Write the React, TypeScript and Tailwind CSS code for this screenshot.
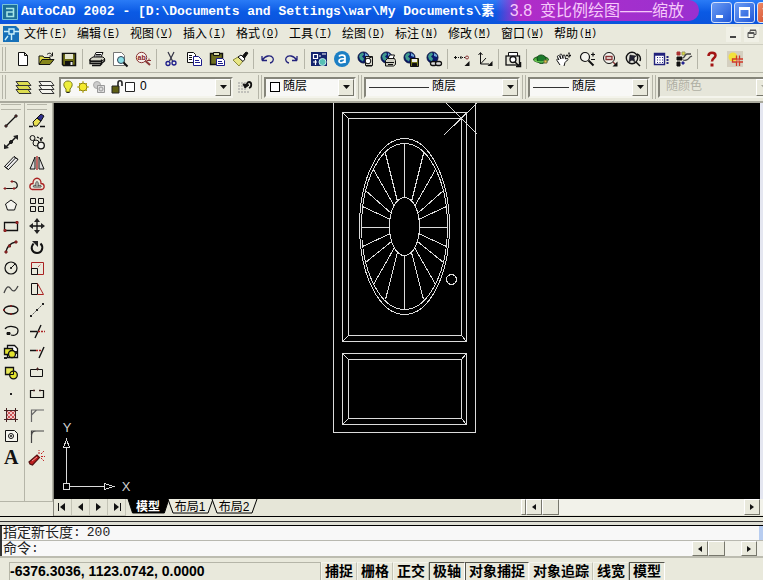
import type { ReactNode } from "react";

const ui = "font-['Liberation_Sans','Noto_Sans_CJK_SC',sans-serif]";
const mono = "font-['Liberation_Mono','Noto_Sans_CJK_SC',monospace]";
const raised = "border border-t-white border-l-white border-r-[#77776c] border-b-[#77776c] bg-[#e9e9dc]";

type Tool = { label: string; art: ReactNode };

function Icon({ children }: { children: ReactNode }) {
  return (
    <svg className="overflow-visible" width="16" height="16" viewBox="0 0 16 16" fill="none" stroke="#111" strokeWidth="1" aria-hidden="true">
      {children}
    </svg>
  );
}

const globe = (
  <>
    <circle cx="6.5" cy="6.5" r="5.5" fill="#0a1a6e" stroke="#0a1440" />
    <path d="M3 3l3-1.500 1 2-2 2 2 2-1 3-3-2-1-3z" fill="#3f9a8e" stroke="none" />
    <path d="M8 2l3 2v2l-3-1z" fill="#6fa8d8" stroke="none" />
  </>
);

const groups: Tool[][] = [
  [
    { label: "新建", art: <path d="M3.500 1.500h6l3 3v10h-9zM9.500 1.500v3h3" fill="#fff" /> },
    {
      label: "打开",
      art: (
        <>
          <path d="M1 13V5h4l1 1.500h6V9" fill="#dcd84a" />
          <path d="M1 13.500L4 8.500h12l-4 5z" fill="#86861a" />
          <path d="M9 3.500c2-2 4-1.500 5 .5M14.500 1.500V5h-3" />
        </>
      ),
    },
    {
      label: "保存",
      art: (
        <>
          <path d="M1.500 2.500h13v12h-12l-1-1z" fill="#6a6a14" strokeWidth="1.500" />
          <path d="M4 3h8v5H4z" fill="#e4e4cc" stroke="none" />
          <path d="M4 10h8v5H4z" fill="#111" stroke="none" />
          <path d="M9.500 11h2v3h-2z" fill="#eee" stroke="none" />
        </>
      ),
    },
  ],
  [
    {
      label: "打印",
      art: (
        <>
          <path d="M5 6l2-4.500h7L12 6" fill="#fff" />
          <path d="M1 8l3-2h10l2 2-3 2H1z" fill="#d6d6c8" />
          <path d="M1 8.500v4h11.500v-4M1 10.500h11.500M12.500 12.500l3-2.500V8M3 14.500h8l2-2" fill="none" strokeWidth="1.300" />
          <path d="M7 3.500h5M6.500 5h5" />
        </>
      ),
    },
    {
      label: "打印预览",
      art: (
        <>
          <path d="M1.500 1.500h8l3 3v10h-11z" fill="#fff" stroke="#777" />
          <circle cx="9" cy="9" r="3.500" fill="#8ce0e8" stroke="#345" />
          <path d="M11.500 11.500l4 4" strokeWidth="2" />
        </>
      ),
    },
    {
      label: "查找和替换",
      art: (
        <>
          <circle cx="6.500" cy="6.500" r="5.200" fill="#f6eeea" stroke="#833" />
          <path d="M10.500 10l4.500 4" stroke="#833" strokeWidth="2" />
          <text x="2.500" y="9" fontSize="7" fontWeight="700" fill="#822" stroke="none" fontFamily="Liberation Sans">ab</text>
          <path d="M12 9.500h4M14 7.500v2" stroke="#833" />
        </>
      ),
    },
  ],
  [
    {
      label: "剪切",
      art: (
        <>
          <path d="M5 1l4.500 9M11 1L6.500 10" strokeWidth="1.200" stroke="#334" />
          <circle cx="5" cy="12.500" r="2" stroke="#1c1c8a" strokeWidth="1.300" />
          <circle cx="11" cy="12" r="2" stroke="#1c1c8a" strokeWidth="1.300" />
        </>
      ),
    },
    {
      label: "复制",
      art: (
        <>
          <path d="M1.500 1.500h6l2 2v8h-8z" fill="#fff" />
          <path d="M3 4.500h3M3 6.500h3M3 8.500h3" />
          <path d="M7.500 5.500h5l3 3v6h-8z" fill="#fff" stroke="#1c1c8a" />
          <path d="M9 9.500h4M9 11.500h5" stroke="#1c1c8a" />
        </>
      ),
    },
    {
      label: "粘贴",
      art: (
        <>
          <path d="M1.500 2.500h12v11h-12z" fill="#6d6d20" strokeWidth="1.400" />
          <path d="M4.500 1.500h6v3h-6z" fill="#d8d8a8" />
          <path d="M7.500 7.500h6l2 2v5h-8z" fill="#fff" stroke="#1c1c8a" />
          <path d="M9 10.500h4M9 12.500h5" stroke="#1c1c8a" />
        </>
      ),
    },
    {
      label: "特性匹配",
      art: (
        <>
          <path d="M1 9l5-3 5 4-4 5z" fill="#e8e684" stroke="#8a8a3a" />
          <path d="M6 6l3-2 4 4-2 2.500z" fill="#fff" />
          <path d="M10.500 5L14 1l2 1-3.500 5z" fill="#111" />
        </>
      ),
    },
  ],
  [
    { label: "放弃", art: <path d="M2 9.500V5M2 9.500h5M2.500 9C5 4.500 11 3.500 13 7c1 2-.5 4.500-3 5" stroke="#22227c" strokeWidth="1.300" /> },
    { label: "重做", art: <path d="M14 9.500V5M14 9.500H9M13.500 9C11 4.500 5 3.500 3 7c-1 2 .5 4.500 3 5" stroke="#22227c" strokeWidth="1.300" /> },
  ],
  [
    {
      label: "今日",
      art: (
        <>
          <path d="M0 1h16v14H0z" fill="#14246e" stroke="none" />
          <path d="M2.500 3.500h4v4h-4zM8 5h2M11 3h4M4.500 9v5M2 11h4" stroke="#fff" strokeWidth="1.200" />
          <circle cx="11.500" cy="11" r="3.500" fill="#58c0b4" stroke="#c0ece8" />
        </>
      ),
    },
    {
      label: "Autodesk 联机",
      art: (
        <>
          <circle cx="8" cy="8" r="8" fill="#1b7fc4" stroke="none" />
          <path d="M5 5.500c1-2 6-2 6 .7V12M11 7.500C8 7.500 5 8 5 10c0 2.500 4.500 2.300 6-.5" stroke="#fff" strokeWidth="1.700" />
        </>
      ),
    },
    {
      label: "发布到 Web",
      art: (
        <>
          {globe}
          <path d="M8.500 5.500h7v9h-7z" fill="#d8d8cc" />
          <circle cx="11" cy="10" r="2.800" fill="#fff" />
          <path d="M9 15h6M12 7l3-1" />
        </>
      ),
    },
    {
      label: "电子传递",
      art: (
        <>
          {globe}
          <path d="M8 8l1.500-4h5L13 8z" fill="#fff" />
          <path d="M5.500 9.500l2-2h7l1 2v4l-2 1.500h-8z" fill="#d0d0c4" />
          <path d="M6 11.500h8M8 13.500h5" />
        </>
      ),
    },
    {
      label: "保存到 Web",
      art: (
        <>
          {globe}
          <path d="M7.500 7.500h8v8h-8z" fill="#77771e" />
          <path d="M9 8h5v3H9z" fill="#eee" stroke="none" />
          <path d="M9.500 12.500h4V15h-4z" fill="#111" />
        </>
      ),
    },
    {
      label: "插入超链接",
      art: (
        <>
          {globe}
          <rect x="4.500" y="10.500" width="6" height="4" rx="2" fill="#ddd" strokeWidth="1.300" />
          <rect x="9.500" y="10.500" width="6" height="4" rx="2" fill="#ddd" strokeWidth="1.300" />
        </>
      ),
    },
  ],
  [
    {
      label: "临时追踪点",
      art: (
        <>
          <path d="M0 6.500h11" strokeDasharray="1 1" />
          <path d="M1.500 5v3M7 5v3" />
          <circle cx="13" cy="6.500" r="1.500" stroke="#833" />
          <path d="M15.500 10v5h-5z" fill="#111" stroke="none" />
        </>
      ),
    },
    {
      label: "UCS",
      art: (
        <>
          <path d="M3.500 2v11H12M3.500 13L9 7M1.500 4l2-2.500 2 2.500" />
          <path d="M15.500 10v5h-5z" fill="#111" stroke="none" />
        </>
      ),
    },
  ],
  [
    {
      label: "鸟瞰视图",
      art: (
        <>
          <path d="M3.500 5V1.500h9V5" fill="#fff" />
          <rect x="1" y="5" width="13.500" height="9" fill="#e8e8dc" strokeWidth="1.300" />
          <circle cx="8" cy="8.500" r="3" fill="#fff" strokeWidth="1.300" />
          <path d="M10 11l4 4M15.500 11v4.500H11" strokeWidth="1.500" />
        </>
      ),
    },
  ],
  [
    {
      label: "三维动态观察",
      art: (
        <>
          <ellipse cx="8" cy="8.500" rx="7.500" ry="3" fill="#4cae3c" stroke="#174f14" />
          <path d="M4 7c1-4 7-4 9 0l-1 4c-2 2-5 2-7 0z" fill="#1b7a2a" stroke="#104a18" />
          <path d="M1.500 9.500c4 2 9 2 13 0" stroke="#7fdc60" />
          <path d="M11 9h3v3h-3z" fill="#e8c840" stroke="#664" />
        </>
      ),
    },
    {
      label: "实时平移",
      art: (
        <>
          <path d="M4 14L1 9.500c-1-1.500 1-2 2-.5L1.500 6C1 4.500 3 4 3.500 5.500L5 8 4 4.500C3.500 3 5.500 2.500 6 4l1 3.500L7 5c0-1.500 2-1.500 2 0l.5 3L11 7.500c1.500 0 1.500 1 .5 1.500L9 11.500 8 15" fill="#fff" />
          <path d="M10 4.500h6M13 1.500v6" strokeWidth="1.400" strokeDasharray="2 1" />
        </>
      ),
    },
    {
      label: "实时缩放",
      art: (
        <>
          <circle cx="6" cy="6" r="4.500" fill="#f4f4ee" strokeWidth="1.200" />
          <path d="M9.500 9.500l5 5" strokeWidth="2" />
          <path d="M12 3.500h4M14 1.500v4M12 8.500h4" strokeWidth="1.200" />
        </>
      ),
    },
    {
      label: "窗口缩放",
      art: (
        <>
          <circle cx="7" cy="7" r="5.500" fill="#f4f4ee" />
          <path d="M4 5.500h6v3H4zM11 11l3 3" stroke="#833" strokeWidth="1.300" />
          <path d="M15.500 10.500v5h-5z" fill="#111" stroke="none" />
        </>
      ),
    },
    {
      label: "缩放上一个",
      art: (
        <>
          <circle cx="7" cy="7" r="5.700" fill="#e4e4dc" strokeWidth="1.400" />
          <path d="M4 11l1-7 6 1-2 2 1 4-3-2z" fill="#223" strokeWidth="0.500" />
          <path d="M11 11l4 4M12 3c3 1 4 4 3 7" strokeWidth="1.500" />
        </>
      ),
    },
  ],
  [
    {
      label: "特性",
      art: (
        <>
          <path d="M1.500 2.500h10v11h-10z" fill="#fff" stroke="#22227c" strokeWidth="1.400" />
          <path d="M1.500 3.500h10" stroke="#22227c" strokeWidth="2.500" />
          <path d="M4.500 6v7M7 6v7M9.500 6v7" stroke="#22227c" strokeDasharray="1 1.500" />
          <path d="M14.500 5v9" strokeDasharray="2 1" stroke="#22227c" strokeWidth="2" />
        </>
      ),
    },
    {
      label: "设计中心",
      art: (
        <>
          <path d="M1 1h3v3H1z" fill="#a33" stroke="#a33" />
          <path d="M6 1h3v3H6z" fill="#dd3" stroke="#996" />
          <path d="M1 6h5v3H1zM1 11h3v4H1z" fill="#111" />
          <path d="M6 11h2v2H6z" fill="#252590" stroke="#252590" />
          <path d="M7 7c2-1 2-4 4-4h4M7 9c3 1 5 0 7-3l2-1" stroke="#444" strokeWidth="1.300" />
        </>
      ),
    },
  ],
  [
    {
      label: "帮助",
      art: (
        <>
          <path d="M4.500 5c0-4.500 7-4 7-.5C11.500 7 8 7 8 10.500" stroke="#a31414" strokeWidth="2.500" />
          <path d="M6.500 12.500h3v3h-3z" fill="#a31414" stroke="none" />
        </>
      ),
    },
    {
      label: "活动助手",
      art: (
        <>
          <path d="M0 0h16v16H0z" fill="#d4cfc0" stroke="none" />
          <circle cx="6" cy="6" r="4.500" fill="#f2e23c" stroke="none" />
          <path d="M9.500 4.500v3.500h-4v3h4v4M12.500 15v-4h3.500M16 8h-3.500V4.500" fill="none" stroke="#d03a28" strokeWidth="1.300" />
          <path d="M10 8h2v3h-2z" fill="#fff4d0" stroke="#d03a28" />
        </>
      ),
    },
  ],
];

const drawTools: Tool[] = [
  { label: "直线", art: <><path d="M3 13L13 3" strokeWidth="1.300" /><path d="M2 12h2v2H2zM12 2h2v2h-2z" fill="#a22" stroke="#222" /></> },
  { label: "构造线", art: <><path d="M2 14L14 2" strokeWidth="1.500" /><path d="M1 15v-5l5 4zM15 1v5l-5-4z" fill="#222" stroke="none" /><circle cx="8" cy="8" r="1.500" fill="#222" /></> },
  { label: "多线", art: <path d="M1.500 11.500L11 1.500l4 3L5.500 14.500zM3.500 12.500l9-9.500M1.500 11.500l4 3M11 1.500l4 3" fill="#eee" /> },
  { label: "多段线", art: <><path d="M2 12.500h9c5 0 4-7-1-7" strokeWidth="1.200" /><path d="M1 12h2v1H1zM10 12h2v1h-2zM8 5h2v1H8z" fill="#a22" stroke="#822" /></> },
  { label: "正多边形", art: <path d="M8 3l5.500 4-2 6h-7l-2-6z" fill="#f4f4ee" /> },
  { label: "矩形", art: <><path d="M1.500 4.500h13v8h-13z" strokeWidth="1.300" /><path d="M1 11.500h2v2H1zM13 3.500h2v2h-2z" fill="#a22" stroke="#822" /></> },
  { label: "圆弧", art: <><path d="M3 13C4 8 7 4 13 3" strokeWidth="1.300" /><path d="M2 12h2v2H2zM12 2h2v2h-2zM5.500 6h2v2h-2z" fill="#a22" stroke="#722" /></> },
  { label: "圆", art: <><circle cx="8" cy="8" r="6" strokeWidth="1.200" /><path d="M8 8l4-4" /><path d="M7.500 7.500h1v1h-1z" fill="#222" /></> },
  { label: "样条曲线", art: <path d="M1 12c3-8 5-7 7-4s4 3 7-3" stroke="#444" strokeWidth="1.300" /> },
  { label: "椭圆", art: <><ellipse cx="8" cy="8" rx="7" ry="4" strokeWidth="1.300" /><path d="M7 3h2v2H7zM7 11h2v2H7zM0 7h2v2H0z" fill="#722" stroke="none" /></> },
  { label: "椭圆弧", art: <><path d="M2 6c3-4 13-3 13 1.500S11 13 8 12" strokeWidth="1.200" /><path d="M4 9.500h3v2H4z" fill="#222" /></> },
  { label: "插入块", art: <><path d="M4.500 1.500h7l3 3v9h-10z" fill="#fff" strokeWidth="1.300" /><path d="M1.500 4.500h8v6h-8z" fill="#e4e430" strokeWidth="1.300" /><circle cx="9" cy="10" r="3.500" fill="#e4e430" strokeWidth="1.300" /><path d="M1 14h3M13 7v3" stroke="#222" strokeWidth="2" /></> },
  { label: "创建块", art: <><path d="M2.500 2.500h8v7h-8z" fill="#e8e858" strokeWidth="1.300" /><circle cx="10.500" cy="10" r="3.800" fill="#e4e430" strokeWidth="1.300" /><path d="M6.500 9.500h4v-3" /></> },
  { label: "点", art: <path d="M7 7h2v2H7z" fill="#222" stroke="none" /> },
  { label: "图案填充", art: <><path d="M3.500 3.500h9v9h-9z" fill="#eecaca" /><path d="M1 3.500h14M1 12.500h14M3.500 1v14M12.500 1v14" stroke="#422" /><path d="M4 8l4-4M4 12l8-8M8 12l4-4M4 4l8 8M4 8l4 4M8 4l4 4" stroke="#c55" /></> },
  { label: "面域", art: <><path d="M2.500 2.500h9l3 3v8h-12z" fill="#f4f4ee" /><circle cx="8" cy="8" r="2.500" /><path d="M7.500 7.500h1v1h-1z" /></> },
  { label: "多行文字", art: <text x="1" y="15" fontSize="20" fontWeight="700" fill="#111" stroke="none" fontFamily="Liberation Serif">A</text> },
];

const editTools: Tool[] = [
  { label: "删除", art: <><path d="M0 13.500h4M11 13.500h5" strokeWidth="1.500" /><path d="M4 9l4-4 4 3-4 5H5z" fill="#e8e050" /><path d="M8 5l4-4 3 2-3 5z" fill="#30308c" /></> },
  { label: "复制对象", art: <><circle cx="3.500" cy="4" r="2.500" /><circle cx="7" cy="9" r="3" /><circle cx="12" cy="11.500" r="3.300" fill="#f4f4ee" strokeWidth="1.300" /><path d="M8 3l4 2M13 3v3h-3" strokeDasharray="2 1" strokeWidth="1.300" /></> },
  { label: "镜像", art: <><path d="M6 2v12H1zM10 2v12h5z" fill="#ddd" /><path d="M8 1v14" stroke="#a22" strokeWidth="1.300" /></> },
  { label: "偏移", art: <><path d="M3 13.500c-3-1-3-6 1-6-.5-7 8.500-7 8 0 4 0 4 5 1 6z" stroke="#a22" strokeWidth="1.300" /><path d="M4.500 11c-1-2 2-2 2.500-1-1-6 3-6 2 0 1-1 4-1 3 1z" stroke="#444" /></> },
  { label: "阵列", art: <path d="M1.500 1.500h5v5h-5zM9.500 1.500h5v5h-5zM1.500 9.500h5v5h-5zM9.500 9.500h5v5h-5z" /> },
  { label: "移动", art: <><path d="M8 2v12M2 8h12" strokeWidth="1.300" /><path d="M8 0l3 4H5zM8 16l3-4H5zM0 8l4-3v6zM16 8l-4-3v6z" fill="#222" stroke="none" /></> },
  { label: "旋转", art: <><path d="M4.500 4.500C1 9 3 14 8 14s7-6 3.500-9.500" strokeWidth="2" /><path d="M3 2h6v6z" fill="#222" stroke="none" /></> },
  { label: "比例缩放", art: <><path d="M2.500 2.500h12v12h-12z" stroke="#a22" /><path d="M2.500 8.500h6v6h-6z" /><path d="M9 7l3-3" stroke="#a22" strokeDasharray="1 1" /></> },
  { label: "拉伸", art: <><path d="M2.500 2.500h6v11h-6z" /><path d="M8.500 2.500l6 11h-6" stroke="#a22" /></> },
  { label: "拉长", art: <><path d="M2 14L14 2" strokeDasharray="2 1" stroke="#555" /><path d="M1 13h2v2H1zM7 7h2v2H7zM13 1h2v2h-2z" fill="#222" stroke="none" /></> },
  { label: "修剪", art: <><path d="M6 15l6-13M1 8.500h7" strokeWidth="1.400" /><path d="M9 8.500h7" stroke="#a22" strokeWidth="1.500" strokeDasharray="2 1" /></> },
  { label: "延伸", art: <><path d="M1 6.500h6M10 14l5-11" strokeWidth="1.400" /><path d="M7 6.500h6" stroke="#a22" strokeWidth="1.500" strokeDasharray="2 1" /></> },
  { label: "打断于点", art: <><path d="M1.500 4.500h12v7h-12z" /><path d="M8 3h1v2H8z" fill="#a22" stroke="#422" /></> },
  { label: "打断", art: <><path d="M5 4.500H1.500v7h13v-7H11" strokeWidth="1.200" /><path d="M4.500 4h1v1h-1zM10.500 4h1v1h-1z" fill="#a22" stroke="#422" /></> },
  { label: "倒角", art: <path d="M2.500 15V8l5-5H15M2.500 8V3h5" stroke="#666" strokeWidth="1.200" /> },
  { label: "圆角", art: <path d="M2.500 15V8c0-3 2-5 5-5H15M2.500 7V3h4" stroke="#444" strokeWidth="1.200" /> },
  { label: "分解", art: <><path d="M0 13l8-7 2.500 2.500L3.500 16 1 15z" fill="#c02020" stroke="#511" strokeWidth="1.200" /><path d="M3 12l5-4" stroke="#f09090" /><path d="M10 5V1M12 5l3-3M12 7.500h4M12 9l3 3" stroke="#c02020" strokeDasharray="2 1" /></> },
];

const menus = [
  ["文件", "F"],
  ["编辑", "E"],
  ["视图", "V"],
  ["插入", "I"],
  ["格式", "O"],
  ["工具", "T"],
  ["绘图", "D"],
  ["标注", "N"],
  ["修改", "M"],
  ["窗口", "W"],
  ["帮助", "H"],
];

const toggles: [string, boolean][] = [
  ["捕捉", false],
  ["栅格", false],
  ["正交", false],
  ["极轴", true],
  ["对象捕捉", true],
  ["对象追踪", false],
  ["线宽", false],
  ["模型", true],
];

function Grip() {
  return (
    <span className="flex shrink-0 gap-[2px] px-[2px]" aria-hidden="true">
      <span className="h-[24px] w-px bg-[#b5b5a8]" />
      <span className="h-[24px] w-px bg-[#b5b5a8]" />
    </span>
  );
}

function Divider() {
  return <span className="mx-[2px] h-[20px] w-px shrink-0 bg-[#b5b5a8]" aria-hidden="true" />;
}

function ToolButton({ tool, size }: { tool: Tool; size: string }) {
  return (
    <button type="button" aria-label={tool.label} className={`flex shrink-0 items-center justify-center ${size}`}>
      <Icon>{tool.art}</Icon>
    </button>
  );
}

function Combo(props: { label: string; value: string; width: string; lead?: ReactNode; disabled?: boolean }) {
  const { label, value, width, lead, disabled } = props;
  return (
    <div
      className={`flex h-[21px] shrink-0 items-center border-2 border-t-[#85857a] border-l-[#85857a] border-r-[#f4f4ec] border-b-[#f4f4ec] ${width} ${disabled ? "bg-[#e6e6da]" : "bg-[#f8f8f6]"}`}
    >
      {lead}
      <div className="relative h-full min-w-0 flex-1">
        <select
          aria-label={label}
          disabled={disabled}
          className={`block h-[15px] w-full appearance-none bg-transparent pl-[3px] text-[12px] leading-[15px] ${ui} ${disabled ? "text-[#b0b0a4]" : "text-black"}`}
        >
          <option>{value}</option>
        </select>
        <span className={`pointer-events-none absolute top-0 right-0 flex h-full w-[16px] items-center justify-center ${raised}`}>
          <svg width="7" height="4" viewBox="0 0 7 4" fill={disabled ? "#a8a89c" : "#111"} aria-hidden="true">
            <path d="M0 0h7L3.500 4z" />
          </svg>
        </span>
      </div>
    </div>
  );
}

function LayerIcon({ tint }: { tint: string }) {
  return (
    <>
      <path d="M1 10.500l3 4h12l-3-4zM1 6.500l3 4h12l-3-4zM1 2.500l3 4h12l-3-4z" fill={tint} stroke="#333" />
    </>
  );
}

function Arrow({ dir, end }: { dir: "left" | "right"; end?: boolean }) {
  return (
    <svg width="9" height="8" viewBox="0 0 9 8" fill="#111" aria-hidden="true">
      {dir === "left" ? <path d="M7 0v8L2 4z" /> : <path d="M2 0v8l5-4z" />}
      {end && (dir === "left" ? <path d="M0 0h1v8H0z" /> : <path d="M8 0h1v8H8z" />)}
    </svg>
  );
}

function ScrollButton({ dir }: { dir: "left" | "right" }) {
  return (
    <button type="button" aria-label={dir === "left" ? "向左滚动" : "向右滚动"} className={`flex w-[16px] shrink-0 items-center justify-center ${raised}`}>
      <svg width="4" height="6" viewBox="0 0 4 6" fill="#111" aria-hidden="true">
        {dir === "left" ? <path d="M4 0v6L0 3z" /> : <path d="M0 0v6l4-3z" />}
      </svg>
    </button>
  );
}

const spokes = [
  [19, 153, 7, 201],
  [31, 169, 10, 206],
  [39, 190, 13, 213],
  [42, 206, 14, 219],
  [43, 227, 15, 227],
  [42, 246, 14, 233],
  [39, 262, 13, 241],
  [31, 284, 10, 247],
  [19, 299, 7, 252],
];

function Drawing() {
  return (
    <svg className="block" width="707" height="396" viewBox="54 103 707 396" role="img" aria-label="门立面图">
      <g transform="translate(.5 .5)" fill="none" stroke="#dcdcdc" strokeWidth="1" shapeRendering="crispEdges">
        <path d="M333 100V432H475V100" />
        <path d="M342 112H466V341H342ZM348 118H461V335H348ZM342 112l6 6M342 341l6-6M466 341l-5-6" />
        <path d="M342 353H466V424H342ZM348 359H461V418H348ZM342 353l6 6M466 353l-5 6M342 424l6-6M466 424l-5-6" />
        <ellipse cx="404" cy="226" rx="45" ry="88" />
        <ellipse cx="404" cy="226" rx="43" ry="83" />
        <ellipse cx="404" cy="226" rx="15" ry="29" />
        <path d="M404 143V197M404 255V309" />
        {spokes.map(([dx, y1, ix, y2]) => (
          <path key={y1} d={`M${404 + dx} ${y1}L${404 + ix} ${y2}M${404 - dx} ${y1}L${404 - ix} ${y2}`} />
        ))}
        <circle cx="451" cy="279" r="5" />
        <path d="M446 103L477 134M476 103L443 135" />
        <path d="M63 483h6v6h-6zM66 483V447M63 447l3-8 3 8zM69 486H104M104 483l9 3-9 3z" />
      </g>
      <g fill="#d0d0d0" fontSize="13" fontFamily="Liberation Sans" textAnchor="middle">
        <text x="67" y="432">Y</text>
        <text x="126" y="491">X</text>
      </g>
    </svg>
  );
}

function SheetTab({ name, active }: { name: string; active?: boolean }) {
  return (
    <button type="button" role="tab" aria-selected={!!active} className={`relative flex h-[15px] shrink-0 items-center justify-center text-[12px] leading-[14px] ${active ? "w-[40px] font-bold text-white" : "w-[44px] text-black"}`}>
      <svg className="absolute inset-0 h-full w-full overflow-visible" viewBox="0 0 44 15" preserveAspectRatio="none" aria-hidden="true">
        <path d="M0 0L5 14H40L45 0" fill={active ? "#000" : "#ecece0"} stroke="#000" />
      </svg>
      <span className="relative">{name}</span>
    </button>
  );
}

export default function App() {
  const caption = "flex h-[21px] w-[21px] shrink-0 items-center justify-center rounded-[3px] border border-[#d5e2fb]";
  return (
    <div className={`flex h-screen flex-col overflow-hidden bg-[#e9e9dc] text-black ${ui}`}>
      <header className="relative flex h-[24px] shrink-0 items-center bg-linear-to-b from-[#2a7bf6] via-[#0a5ae4] to-[#0b54dc] pl-[2px]">
        <svg width="16" height="16" viewBox="0 0 16 16" aria-hidden="true">
          <path d="M.5.5h15v15H.5z" fill="#1c6f98" stroke="#78c4d8" />
          <path d="M4 4.500h7.500v8H5V8h6" fill="none" stroke="#a6e6e6" strokeWidth="1.600" />
        </svg>
        <h1 className={`ml-[3px] min-w-0 flex-1 overflow-hidden text-[13px] font-bold whitespace-pre text-white ${mono}`}>
          {"AutoCAD 2002 - [D:\\Documents and Settings\\war\\My Documents\\素"}
        </h1>
        <div className="absolute top-0 right-[64px] flex h-[21px] w-[204px] items-center justify-center gap-2 rounded-r-[10px] bg-linear-to-r from-transparent via-[#b02cc8] via-12% to-[#9a30d0] text-[16px] leading-[20px] whitespace-nowrap text-[#f6c8fa]">
          <span>3.8</span>
          <span>变比例绘图——缩放</span>
        </div>
        <div className="-mr-[15px] flex shrink-0 gap-[2px]">
          <button type="button" aria-label="最小化" className={`${caption} bg-linear-to-br from-[#6c9cf4] to-[#1f56d8]`}>
            <svg width="13" height="13" viewBox="0 0 13 13"><path d="M1 9h7v3H1z" fill="#fff" /></svg>
          </button>
          <button type="button" aria-label="最大化" className={`${caption} bg-linear-to-br from-[#6c9cf4] to-[#1f56d8]`}>
            <svg width="13" height="13" viewBox="0 0 13 13"><path d="M1 1h11v11H1zM2.500 4v6.500h8V4z" fill="#fff" fillRule="evenodd" /></svg>
          </button>
          <button type="button" aria-label="关闭" className={`${caption} bg-linear-to-br from-[#ee8a66] to-[#cc3a16]`}>
            <svg width="13" height="13" viewBox="0 0 13 13"><path d="M2 2l9 9M11 2l-9 9" stroke="#fff" strokeWidth="2" /></svg>
          </button>
        </div>
      </header>

      <nav className="flex h-[21px] shrink-0 items-center border-b border-[#cfcfc2] pl-[3px]">
        <svg width="16" height="16" viewBox="0 0 16 16" aria-hidden="true">
          <path d="M0 0h13l3 3v13H0z" fill="#1670b8" />
          <path d="M6 3h5v5H6zM1 5.500h5M11 5.500h5M8.500 8v6M5 10l-3 4" fill="none" stroke="#c8f0fa" strokeWidth="1.400" />
        </svg>
        <ul className="ml-[5px] flex flex-1">
          {menus.map(([name, key]) => (
            <li key={name}>
              <button type="button" className="flex w-[53px] items-center text-[12px] leading-[18px] whitespace-nowrap">
                {name}
                <span className={`ml-px text-[10px] ${mono}`}>
                  (<u>{key}</u>)
                </span>
              </button>
            </li>
          ))}
        </ul>
        <div className="flex gap-[3px] pr-[4px]">
          <button type="button" aria-label="最小化图形" className="flex h-[15px] w-[15px] items-center justify-center bg-[#f0f0e6]">
            <svg width="9" height="9" viewBox="0 0 9 9"><path d="M1 6h6v2H1z" fill="#444" /></svg>
          </button>
          <button type="button" aria-label="还原图形" className="flex h-[15px] w-[15px] items-center justify-center bg-[#f0f0e6]">
            <svg width="10" height="10" viewBox="0 0 10 10" fill="none" stroke="#555"><path d="M3 3V1.500h6v4H7M1 3.500h6v5H1zM1 4.500h6M3 1h6" /></svg>
          </button>
        </div>
      </nav>

      <div role="toolbar" aria-label="标准工具栏" className="flex h-[28px] shrink-0 items-center border-b border-[#b5b5a8]">
        <Grip />
        <span className="w-[3px] shrink-0" />
        {groups.map((group, i) => (
          <div key={i} className="flex shrink-0 items-center">
            {i > 0 && <Divider />}
            {group.map((tool) => (
              <ToolButton key={tool.label} tool={tool} size="h-[24px] w-[23px]" />
            ))}
          </div>
        ))}
      </div>

      <div role="toolbar" aria-label="对象特性" className="flex h-[30px] shrink-0 items-center border-b-2 border-[#a9a99d]">
        <Grip />
        <span className="w-[3px] shrink-0" />
        <ToolButton size="h-[24px] w-[23px]" tool={{ label: "把对象的图层置为当前", art: <LayerIcon tint="#dcdc50" /> }} />
        <ToolButton size="h-[24px] w-[23px]" tool={{ label: "图层", art: <LayerIcon tint="#f4f4ee" /> }} />
        <Combo
          label="图层列表"
          value="0"
          width="w-[174px] ml-[2px]"
          lead={
            <svg className="shrink-0" width="76" height="16" viewBox="0 0 76 16" fill="none" stroke="#222" aria-hidden="true">
              <path d="M5 10C1 6 3 2 7 2s6 4 2 8v3H5z" fill="#eeee3c" stroke="#77771a" />
              <path d="M5.500 13.500h3" />
              <path d="M22 2v12M16 8h12M18 4l8 8M26 4l-8 8" stroke="#b8a814" />
              <circle cx="22" cy="8" r="4" fill="#f4ea2c" stroke="#8c8010" />
              <circle cx="36" cy="6" r="3.500" fill="#ccc" stroke="#aaa" />
              <path d="M36.500 6.500h7v7h-7z" fill="#ddd" stroke="#999" />
              <circle cx="40" cy="10" r="2" stroke="#999" />
              <path d="M51 7h7v7h-7z" fill="#5e5e12" />
              <path d="M57 7V4c0-3 4-3 4 0v3" strokeWidth="1.600" />
              <path d="M64.500 3.500h9v9h-9z" fill="#fff" />
            </svg>
          }
        />
        <ToolButton
          size="h-[24px] w-[23px]"
          tool={{
            label: "上一个图层",
            art: (
              <>
                <path d="M1 4h9M1 7h8M1 10h9M1 13h12" stroke="#999" strokeDasharray="2 1" />
                <path d="M12 9c3-1 3-6 0-6-2 0-2 2-3 4" strokeWidth="1.800" />
                <path d="M6 5l2 4 4-3z" fill="#111" />
              </>
            ),
          }}
        />
        <Grip />
        <Combo
          label="颜色控制"
          value="随层"
          width="w-[92px]"
          lead={<span className="ml-[4px] h-[10px] w-[10px] shrink-0 border border-black bg-white" />}
        />
        <Grip />
        <Combo label="线型控制" value="随层" width="w-[156px]" lead={<span className="ml-[3px] h-px w-[60px] shrink-0 bg-[#333]" />} />
        <Grip />
        <Combo label="线宽控制" value="随层" width="w-[122px]" lead={<span className="ml-[3px] h-px w-[36px] shrink-0 bg-[#333]" />} />
        <Grip />
        <Combo label="打印样式" value="随颜色" width="w-[116px]" lead={<span className="w-[3px] shrink-0" />} disabled />
      </div>

      <main className="flex min-h-[414px] flex-1 shrink-0 border-b border-black">
        {[drawTools, editTools].map((tools, i) => (
          <div key={i} role="toolbar" aria-label={i ? "修改" : "绘图"} className={`mb-[14px] flex shrink-0 flex-col items-center border-r border-b border-[#b5b5a8] ${i ? "w-[28px] pr-[3px]" : "w-[25px] pr-[2px]"}`}>
            <span className="mt-px flex h-[6px] w-[20px] shrink-0 border-y border-[#b5b5a8]" aria-hidden="true" />
            {tools.map((tool) => (
              <ToolButton key={tool.label} tool={tool} size="h-[21px] w-[22px]" />
            ))}
          </div>
        ))}
        <section className="flex min-w-0 flex-1 flex-col border-l border-[#85857a]">
          <div className="flex min-h-0 flex-1 overflow-hidden">
            <div className="min-w-0 flex-1 overflow-hidden bg-black">
              <Drawing />
            </div>
            <span className="w-[3px] shrink-0 bg-[#e4e6f0]" />
          </div>
          <div className="flex h-[17px] shrink-0 bg-[#e6e6d8]">
            {[
              ["第一个", "left", true],
              ["上一个", "left", false],
              ["下一个", "right", false],
              ["最后一个", "right", true],
            ].map(([label, dir, end]) => (
              <button key={String(label)} type="button" aria-label={String(label)} className="flex w-[18px] shrink-0 items-center justify-center border-r border-b border-[#c4c4b6]">
                <Arrow dir={dir as "left" | "right"} end={Boolean(end)} />
              </button>
            ))}
            <div role="tablist" className="ml-[2px] flex flex-1">
              <SheetTab name="模型" active />
              <SheetTab name="布局1" />
              <SheetTab name="布局2" />
            </div>
            <div className="flex h-[16px] w-[242px] shrink-0 bg-[#f2f2ea] pr-[3px]">
              <span className={`w-[5px] shrink-0 ${raised}`} />
              <ScrollButton dir="left" />
              <span className={`w-[17px] shrink-0 ${raised}`} />
              <span className="flex-1" />
              <ScrollButton dir="right" />
            </div>
          </div>
        </section>
      </main>

      <div className="h-[5px] shrink-0 border-b border-[#333]" />
      <div className="h-[4px] shrink-0 border-b border-black bg-[#deded4]" />

      <section className={`shrink-0 border-l-2 border-[#333] bg-[#f8f8f8] text-[#222] ${mono}`}>
        <div className="flex h-[15px] border-b border-[#b8b8b0]">
          <p className="flex flex-1 items-center gap-[6px] pl-px text-[13px] leading-[14px]">
            <span className="flex items-center">
              <span className="text-[14px]">指定新长度</span>:
            </span>
            <span>200</span>
          </p>
          <span className="w-[4px] bg-[#b8cdf0]" />
        </div>
        <div className="flex h-[15px]">
          <label htmlFor="command" className="flex items-center pl-px text-[13px] leading-[14px]">
            <span className="text-[14px]">命令</span>:
          </label>
          <input id="command" className="min-w-0 flex-1 bg-transparent text-[13px] outline-none" />
          <div className="flex h-[15px] w-[71px] bg-[#f0f0e8] pr-[6px]">
            <ScrollButton dir="left" />
            <span className={`w-[17px] shrink-0 ${raised}`} />
            <span className="flex-1" />
            <ScrollButton dir="right" />
          </div>
        </div>
      </section>

      <footer className="flex h-[24px] shrink-0 items-stretch border-t-2 border-[#bcbcb0] pt-[4px] pl-[9px]">
        <output className="flex w-[312px] shrink-0 items-center border-t border-r border-l border-[#b5b5a8] text-[14px] leading-[17px] font-bold">
          -6376.3036, 1123.0742, 0.0000
        </output>
        {toggles.map(([name, on]) => (
          <button
            key={name}
            type="button"
            aria-pressed={on}
            className={`flex shrink-0 items-center border-x border-t px-[3px] text-[14px] leading-[17px] font-bold whitespace-nowrap ${on ? "border-t-[#55554c] border-r-white border-l-[#55554c]" : "border-t-[#f4f4ec] border-r-[#c4c4b6] border-l-[#f4f4ec]"}`}
          >
            {name}
          </button>
        ))}
      </footer>
    </div>
  );
}
